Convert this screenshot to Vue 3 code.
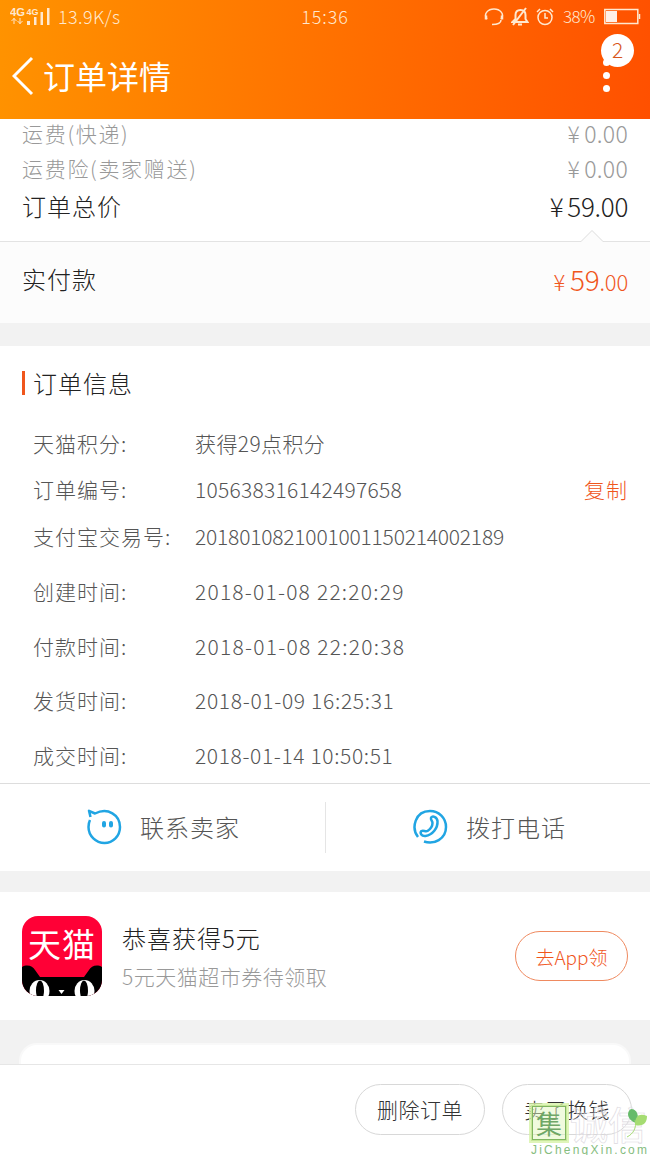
<script setup>
import { ref } from "vue"

const fees = ref([
  { label: "运费(快递)", price: "0.00", size: "small" },
  { label: "运费险(卖家赠送)", price: "0.00", size: "small" },
  { label: "订单总价", price: "59.00", size: "big" },
])

const infos = ref([
  { label: "天猫积分:", value: "获得29点积分", spacing: 0.4, height: 47 },
  { label: "订单编号:", value: "105638316142497658", spacing: 0.27, height: 46, copy: true },
  { label: "支付宝交易号:", value: "2018010821001001150214002189", spacing: -0.2, height: 47 },
  { label: "创建时间:", value: "2018-01-08 22:20:29", spacing: 1.22, height: 63 },
  { label: "付款时间:", value: "2018-01-08 22:20:38", spacing: 1.25, height: 47 },
  { label: "发货时间:", value: "2018-01-09 16:25:31", spacing: 0.69, height: 62 },
  { label: "成交时间:", value: "2018-01-14 10:50:51", spacing: 0.63, height: 48 },
])
</script>

<template>
  <main>
    <header>
      <div class="status">
        <div class="status-left">
          <svg width="42" height="20" viewBox="0 0 42 20">
            <text x="0" y="9" font-size="10" font-weight="bold" textLength="15" lengthAdjust="spacingAndGlyphs">4G</text>
            <text x="16.500" y="8" font-size="8.500" font-weight="bold" textLength="12" lengthAdjust="spacingAndGlyphs">4G</text>
            <path d="M4 11v6M1.500 14l2.500-2.500 2.500 2.500M10 11v6M7.500 14l2.500 2.500 2.500-2.500" class="line" />
            <path d="M17 14h3v4h-3zM24 10h2.500v8H24zM30.500 5h2.500v13h-2.500zM37 1h2.500v17H37z" />
          </svg>
          <span class="speed">13.9K/s</span>
        </div>
        <span class="time">15:36</span>
        <div class="status-right">
          <svg width="20" height="20" viewBox="0 0 20 20" class="stroke">
            <path d="M3 12C-1 7 4 2 10 2s11 5 7 10M17 13c0 3-3 4.500-9 4.500" />
            <path d="M2 8.500v4M18 8.500v4" class="ear" />
          </svg>
          <svg width="18" height="20" viewBox="0 0 18 20" class="stroke">
            <path d="M1.500 15h15l-2-3V8c0-3-2-5-5-5s-5 2-5 5v4zM7 17.500h4M2 18L15 1" class="bell" />
          </svg>
          <svg width="18" height="20" viewBox="0 0 18 20" class="stroke">
            <circle cx="9" cy="10.500" r="7" />
            <path d="M9 6v5h3M1 5l3-3M17 5l-3-3" />
          </svg>
          <span class="percent">38%</span>
          <svg width="37" height="18" viewBox="0 0 37 18" class="stroke">
            <path d="M.8 1.500h33v14H.8z" />
            <path d="M2 3h11v11H2z" class="full" />
            <path d="M35.500 6v5" />
          </svg>
        </div>
      </div>
      <div class="nav">
        <svg width="22" height="40" viewBox="0 0 22 40">
          <path d="M20 2L2 20l18 18" class="back" />
        </svg>
        <h1>订单详情</h1>
        <div class="more">
          <i></i><i></i><i></i>
          <span class="count">2</span>
        </div>
      </div>
    </header>

    <section class="fees">
      <div v-for="fee in fees" class="fee" :class="fee.size">
        <span>{{ fee.label }}</span>
        <span class="price">¥<b>{{ fee.price }}</b></span>
      </div>
      <svg class="arrow" width="24" height="14" viewBox="0 0 24 14">
        <path d="M1 12.500L12 1.500l11 11V14H1z" class="arrow-fill" />
        <path d="M1 12.500L12 1.500l11 11" />
      </svg>
    </section>

    <section class="paid">
      <span>实付款</span>
      <span class="paid-price"><small>¥</small>59<em>.00</em></span>
    </section>

    <section class="info">
      <h2>订单信息</h2>
      <div v-for="info in infos" class="row" :style="{ height: info.height + 'px' }">
        <span class="label">{{ info.label }}</span>
        <span class="value" :style="{ letterSpacing: info.spacing + 'px' }">{{ info.value }}</span>
        <a v-if="info.copy" class="copy">复制</a>
      </div>
    </section>

    <section class="contact">
      <div class="contact-item">
        <svg width="36" height="36" viewBox="0 0 36 36">
          <path d="M4.500 8L3 1.800l6 2.700C22-2 34 6 34 18c0 9-7 16-15.500 16S2.500 27 2.500 18c0-3 .5-5 1.500-7" />
          <path d="M18 14v2.500M25 14v2.500" class="eyes" />
        </svg>
        <span>联系卖家</span>
      </div>
      <div class="contact-item">
        <svg width="36" height="36" viewBox="0 0 36 36">
          <path d="M6 28C-1 19 3 2 18 2c9 0 16 7 16 16 0 12-12 18-22 14.500" />
          <path d="M19 9c1-3 6-1 6.500 3 .5 7-5 14-12 15-4 .5-6-3-4-5 2-1 4 1 6 0 3-2 5-5 5-8 0-2-2-3-1.500-5z" />
        </svg>
        <span>拨打电话</span>
      </div>
    </section>

    <section class="promo">
      <svg class="tmall" width="80" height="80" viewBox="0 0 80 80">
        <clipPath id="tile"><rect width="80" height="80" rx="16" /></clipPath>
        <g clip-path="url(#tile)">
          <rect width="80" height="80" fill="#ff0036" />
          <text x="6" y="41" font-size="33" textLength="67">天猫</text>
          <path d="M0 51c5-3 11-1 13 3l5 7h44l5-7c2-4 8-6 13-3v29H0z" fill="#000" />
          <ellipse cx="17.500" cy="75" rx="10" ry="11" />
          <ellipse cx="62.500" cy="75" rx="10" ry="11" />
          <ellipse cx="18" cy="74.500" rx="4" ry="10" fill="#000" />
          <ellipse cx="62" cy="74.500" rx="4" ry="10" fill="#000" />
          <path d="M36.500 74h6l-3 4z" />
        </g>
      </svg>
      <div class="promo-text">
        <h3>恭喜获得5元</h3>
        <p>5元天猫超市券待领取</p>
      </div>
      <button class="get">去App领</button>
    </section>

    <div class="next">
      <div class="next-card"></div>
    </div>

    <footer>
      <button>删除订单</button>
      <button>卖了换钱</button>
    </footer>

    <div class="watermark">
      <div class="mark-top">
        <span class="seal">集</span>
        <span class="outline">诚信</span>
        <svg class="leaf" width="20" height="30" viewBox="0 0 20 30">
          <path d="M8 15C-1 12-2 4 3 1c6 0 9 7 5 14z" fill="#66bb6a" />
          <path d="M7 17C7 7 12 5 19 8c0 7-4 11-12 9z" fill="#a5dc72" />
          <path d="M7 12c2 8-2 14-8 17" fill="none" stroke="#a5dc72" />
        </svg>
      </div>
      <span class="site">JiChengXin.com</span>
    </div>
  </main>
</template>

<style>
body {
  margin: 0;
  background: #fff;
}
</style>

<style scoped>
main {
  position: relative;
  width: 650px;
  height: 1155px;
  overflow: hidden;
  background: #f2f2f2;
  color: #222;
  font-family: "Noto Sans CJK SC", sans-serif;
  font-weight: 300;
  display: flex;
  flex-direction: column;
}

h1,
h2,
h3,
p {
  margin: 0;
  font-weight: 300;
}

span,
h1,
h2,
h3,
p,
a {
  white-space: nowrap;
}

section,
header,
footer {
  box-sizing: border-box;
  flex-shrink: 0;
}

header {
  height: 119px;
  background: linear-gradient(97deg, #ff9300, #ff5000);
  color: #fff;
}

.status {
  height: 33px;
  display: grid;
  grid-template-columns: 292px 66px 1fr;
  align-items: center;
  font-size: 18px;
  line-height: 20px;
  color: #ffe8cf;
}

.status-left {
  display: flex;
  align-items: center;
  padding-left: 10px;
  gap: 6px;
  fill: #ffe8cf;
  font-family: "Liberation Sans", sans-serif;
}

.status-left .line {
  fill: none;
  stroke: #ffe8cf;
}

.speed {
  font-family: "Noto Sans CJK SC", sans-serif;
  letter-spacing: 0.4px;
}

.speed,
.time,
.percent {
  margin-top: -2px;
}

.time {
  text-align: center;
  letter-spacing: 0.9px;
}

.status-right {
  display: flex;
  align-items: center;
  justify-content: flex-end;
  padding-right: 9px;
  gap: 7px;
}

.percent {
  width: 34px;
  font-size: 17px;
  letter-spacing: -0.6px;
  margin-left: 2px;
}

.stroke {
  fill: none;
  stroke: #ffe8cf;
  stroke-width: 1.5;
}

.stroke .ear {
  stroke-width: 2.5;
}

.stroke .bell {
  stroke-width: 2;
}

.stroke .full {
  fill: #fff0e8;
  stroke: none;
}

.nav {
  height: 86px;
  display: flex;
  align-items: center;
  padding: 0 40px 0 12px;
}

.back {
  fill: none;
  stroke: #fff;
  stroke-width: 3;
}

h1 {
  margin: -3px 0 0 9px;
  flex: 1;
  font-size: 32px;
  font-weight: 400;
  line-height: 40px;
}

.more {
  position: relative;
  display: flex;
  flex-direction: column;
  gap: 6px;
  margin-top: -2px;
}

.more i {
  width: 7px;
  height: 7px;
  border-radius: 50%;
  background: #fff;
}

.count {
  position: absolute;
  left: -2px;
  top: -25px;
  width: 33px;
  height: 33px;
  border-radius: 50%;
  background: #fff;
  color: #d8561c;
  font-size: 21px;
  line-height: 31px;
  text-align: center;
}

.fees {
  position: relative;
  height: 123px;
  padding: 0 22px;
  background: #fff;
  border-bottom: 1px solid #e3e3e3;
}

.fee {
  display: flex;
  justify-content: space-between;
  align-items: center;
}

.small {
  height: 35px;
  padding-bottom: 7px;
  box-sizing: border-box;
  font-size: 21px;
  letter-spacing: 1.7px;
  color: #999;
}

.small .price {
  font-size: 23px;
  letter-spacing: 0.3px;
}

.big {
  height: 32px;
  font-size: 24px;
  letter-spacing: 1px;
}

.big .price {
  font-size: 26px;
  letter-spacing: -0.3px;
}

b {
  font-weight: 300;
  margin-left: 4px;
}

.arrow {
  position: absolute;
  left: 580px;
  top: 110px;
  fill: none;
  stroke: #ddd;
}

.arrow-fill {
  fill: #fcfcfc;
  stroke: none;
}

.paid {
  height: 81px;
  margin-bottom: 23px;
  padding: 0 22px 8px;
  display: flex;
  align-items: center;
  justify-content: space-between;
  background: #fcfcfc;
  font-size: 24px;
  letter-spacing: 1px;
}

.paid-price {
  color: #f0561c;
  font-size: 28px;
  letter-spacing: -0.2px;
}

.paid-price small {
  font-size: 22px;
  margin-right: 5px;
}

.paid-price em {
  font-style: normal;
  font-size: 22px;
}

.info {
  height: 438px;
  padding: 25px 22px 0;
  background: #fff;
  border-bottom: 1px solid #ddd;
}

h2 {
  height: 24px;
  margin-bottom: 24px;
  padding-left: 8px;
  border-left: 3px solid #f0561c;
  font-size: 24px;
  line-height: 23px;
  letter-spacing: 1px;
}

.row {
  display: flex;
  align-items: center;
  color: #555;
  font-size: 21px;
  padding-left: 11px;
}

.label {
  width: 162px;
  letter-spacing: 1px;
}

.copy {
  margin-left: auto;
  color: #f0561c;
  letter-spacing: 1px;
}

.contact {
  height: 87px;
  margin-bottom: 21px;
  padding-bottom: 1px;
  display: grid;
  grid-template-columns: 326px 1fr;
  align-items: center;
  background: #fff;
}

.contact-item {
  height: 51px;
  padding-left: 86px;
  display: flex;
  align-items: center;
  gap: 18px;
  color: #555;
  font-size: 24px;
  letter-spacing: 1px;
}

.contact-item span {
  margin-top: -2px;
}

.contact-item:first-child {
  border-right: 1px solid #e5e5e5;
}

.contact-item svg {
  fill: none;
  stroke: #21a5e3;
  stroke-width: 2.5;
  stroke-linejoin: round;
}

.contact-item .eyes {
  stroke-width: 4;
  stroke-linecap: round;
}

.promo {
  height: 128px;
  padding: 0 22px;
  display: flex;
  align-items: center;
  background: #fff;
}

.tmall {
  fill: #fff;
  font-weight: 400;
}

.promo-text {
  flex: 1;
  margin-left: 20px;
}

h3 {
  font-size: 24px;
  line-height: 36px;
  letter-spacing: 1px;
}

p {
  margin-top: 3px;
  font-size: 21px;
  line-height: 34px;
  color: #999;
  letter-spacing: 0.5px;
}

button {
  box-sizing: border-box;
  padding: 0;
  background: #fff;
  border: 1px solid #d8d8d8;
  border-radius: 26px;
  font-family: inherit;
  font-weight: 300;
}

.get {
  width: 113px;
  height: 50px;
  border-color: #ef8a60;
  color: #f0561c;
  font-size: 19px;
  letter-spacing: 0;
}

.next {
  height: 44px;
  padding: 23px 19px 0;
  box-sizing: border-box;
  flex-shrink: 0;
}

.next-card {
  height: 21px;
  background: #fff;
  border: 2px solid #f9f9f9;
  border-bottom: 0;
  border-radius: 18px 18px 0 0;
  box-sizing: border-box;
}

footer {
  height: 91px;
  display: flex;
  align-items: center;
  justify-content: flex-end;
  gap: 17px;
  padding: 0 18px 2px 0;
  background: #fff;
  border-top: 1px solid #e6e6e6;
}

footer button {
  width: 130px;
  height: 51px;
  color: #333;
  font-size: 21px;
  letter-spacing: 0.5px;
}

.watermark {
  position: absolute;
  left: 531px;
  top: 1104px;
  width: 119px;
}

.mark-top {
  position: relative;
  display: flex;
  align-items: center;
  gap: 3px;
  height: 38px;
}

.seal {
  box-sizing: border-box;
  width: 36px;
  height: 36px;
  border: 2px solid #80b560;
  outline: 3px solid rgb(215, 242, 168, 0.8);
  outline-offset: -1px;
  background: rgb(225, 245, 190, 0.5);
  color: #6fa766;
  font-size: 26px;
  font-weight: 400;
  line-height: 31px;
  text-align: center;
}

.outline {
  color: rgb(255, 255, 255, 0.35);
  -webkit-text-stroke: 0.6px #dcd8de;
  font-size: 38px;
  font-weight: 500;
  line-height: 38px;
}

.leaf {
  position: absolute;
  left: 97px;
  top: 4px;
  overflow: visible;
}

.site {
  display: block;
  color: #86bd80;
  font-family: "Liberation Sans", sans-serif;
  font-size: 12px;
  line-height: 16px;
  letter-spacing: 2.2px;
}
</style>
